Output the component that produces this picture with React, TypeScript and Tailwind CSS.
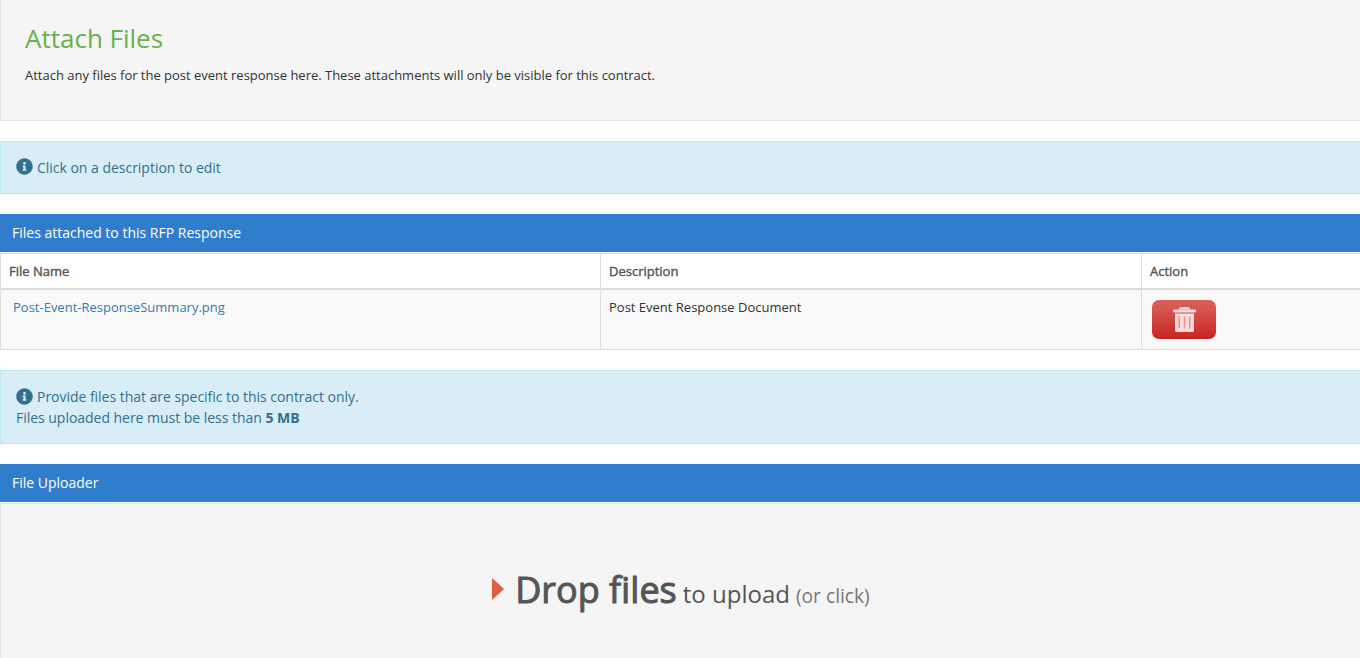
import { FaInfoCircle } from "react-icons/fa";

const TrashIcon = () => (
  <svg width="23" height="25" viewBox="0 0 23 25" fill="none">
    <path d="M6 2 C6 0.8 7 0 8 0 H15 C16 0 17 0.8 17 2 V2.5 H6 Z" fill="#f9dcdb" />
    <rect x="0" y="2.5" width="23" height="3" rx="1.2" fill="#f9dcdb" />
    <path d="M2 6.5 H21 V23.2 C21 24.2 20.2 25 19.2 25 H3.8 C2.8 25 2 24.2 2 23.2 Z" fill="#f9dcdb" />
    <rect x="5.5" y="9.5" width="1.5" height="12" fill="#e88e8b" />
    <rect x="10.75" y="9.5" width="1.5" height="12" fill="#e88e8b" />
    <rect x="16" y="9.5" width="1.5" height="12" fill="#e88e8b" />
  </svg>
);

const PanelHeader = ({ title }: { title: string }) => (
  <div className="h-[38px] bg-[#317dcd] px-3 pb-[2px] flex items-center text-[14px] text-white">
    {title}
  </div>
);

const App = () => {
  return (
    <div className="h-screen overflow-hidden bg-white text-[13px] text-[#333333] font-['Open_Sans',sans-serif]">
      <div className="h-[121px] bg-[#f5f5f5] border-l border-b border-[#e3e3e3] pl-6 pt-5">
        <h1 className="text-[26px] leading-[36px] text-[#6ab04c]">Attach Files</h1>
        <p className="mt-[10px] leading-[18px] tracking-[-0.01px]">
          Attach any files for the post event response here. These attachments will only be
          visible for this contract.
        </p>
      </div>

      <div className="mt-5 h-[53px] bg-[#d9edf7] border-l border-y border-[#bce8f1] pl-[15px] flex items-center gap-1 text-[14px] tracking-[-0.02px] text-[#31708f]">
        <FaInfoCircle size={17} className="mb-[3px]" />
        <span>Click on a description to edit</span>
      </div>

      <div className="mt-5">
        <PanelHeader title="Files attached to this RFP Response" />
        <table className="w-full table-fixed border-collapse mt-px">
          <thead>
            <tr className="h-[35px] text-left text-[#555555]">
              <th className="w-[600px] border border-[#dddddd] border-b-2 pl-2 pt-[2px] font-normal [-webkit-text-stroke:0.4px]">File Name</th>
              <th className="w-[541px] border border-[#dddddd] border-b-2 pl-2 pt-[2px] font-normal [-webkit-text-stroke:0.4px]">Description</th>
              <th className="border border-r-0 border-[#dddddd] border-b-2 pl-2 pt-[2px] font-normal [-webkit-text-stroke:0.4px]">Action</th>
            </tr>
          </thead>
          <tbody>
            <tr className="h-[61px] bg-[#f9f9f9] align-top">
              <td className="border border-[#dddddd] pl-3 pt-[8px]">
                <a className="text-[#337ab7]">Post-Event-ResponseSummary.png</a>
              </td>
              <td className="border border-[#dddddd] pl-2 pt-[8px]">Post Event Response Document</td>
              <td className="border border-r-0 border-[#dddddd] pl-[10px] pt-[10px]">
                <button className="w-16 h-[39px] rounded-[7px] bg-gradient-to-b from-[#d9605c] to-[#c9211e] flex items-center justify-center">
                  <TrashIcon />
                </button>
              </td>
            </tr>
          </tbody>
        </table>
      </div>

      <div className="mt-5 h-[74px] bg-[#d9edf7] border-l border-y border-[#bce8f1] pl-[15px] pt-[15px] text-[14px] leading-[21px] tracking-[-0.03px] text-[#31708f]">
        <div className="flex items-center gap-1">
          <FaInfoCircle size={17} className="mb-[1px]" />
          <span>Provide files that are specific to this contract only.</span>
        </div>
        <div>
          Files uploaded here must be less than <b className="font-bold">5 MB</b>
        </div>
      </div>

      <div className="mt-5">
        <PanelHeader title="File Uploader" />
        <div className="mt-px h-[300px] bg-[#f5f5f5] border-l border-t border-[#e3e3e3] flex justify-center pt-[59px]">
          <div className="flex items-baseline h-[50px] text-[#555555] ml-[1px]">
            <span className="self-center mt-[2px] mr-[11px] w-0 h-0 border-y-[11px] border-y-transparent border-l-[12px] border-l-[#e25c3f]" />
            <span className="text-[36px] [-webkit-text-stroke:1px]">Drop files</span>
            <span className="ml-[6px] text-[24px]">to upload</span>
            <span className="ml-[6px] text-[19.2px] text-[#777777]">(or click)</span>
          </div>
        </div>
      </div>
    </div>
  );
};

export default App;
